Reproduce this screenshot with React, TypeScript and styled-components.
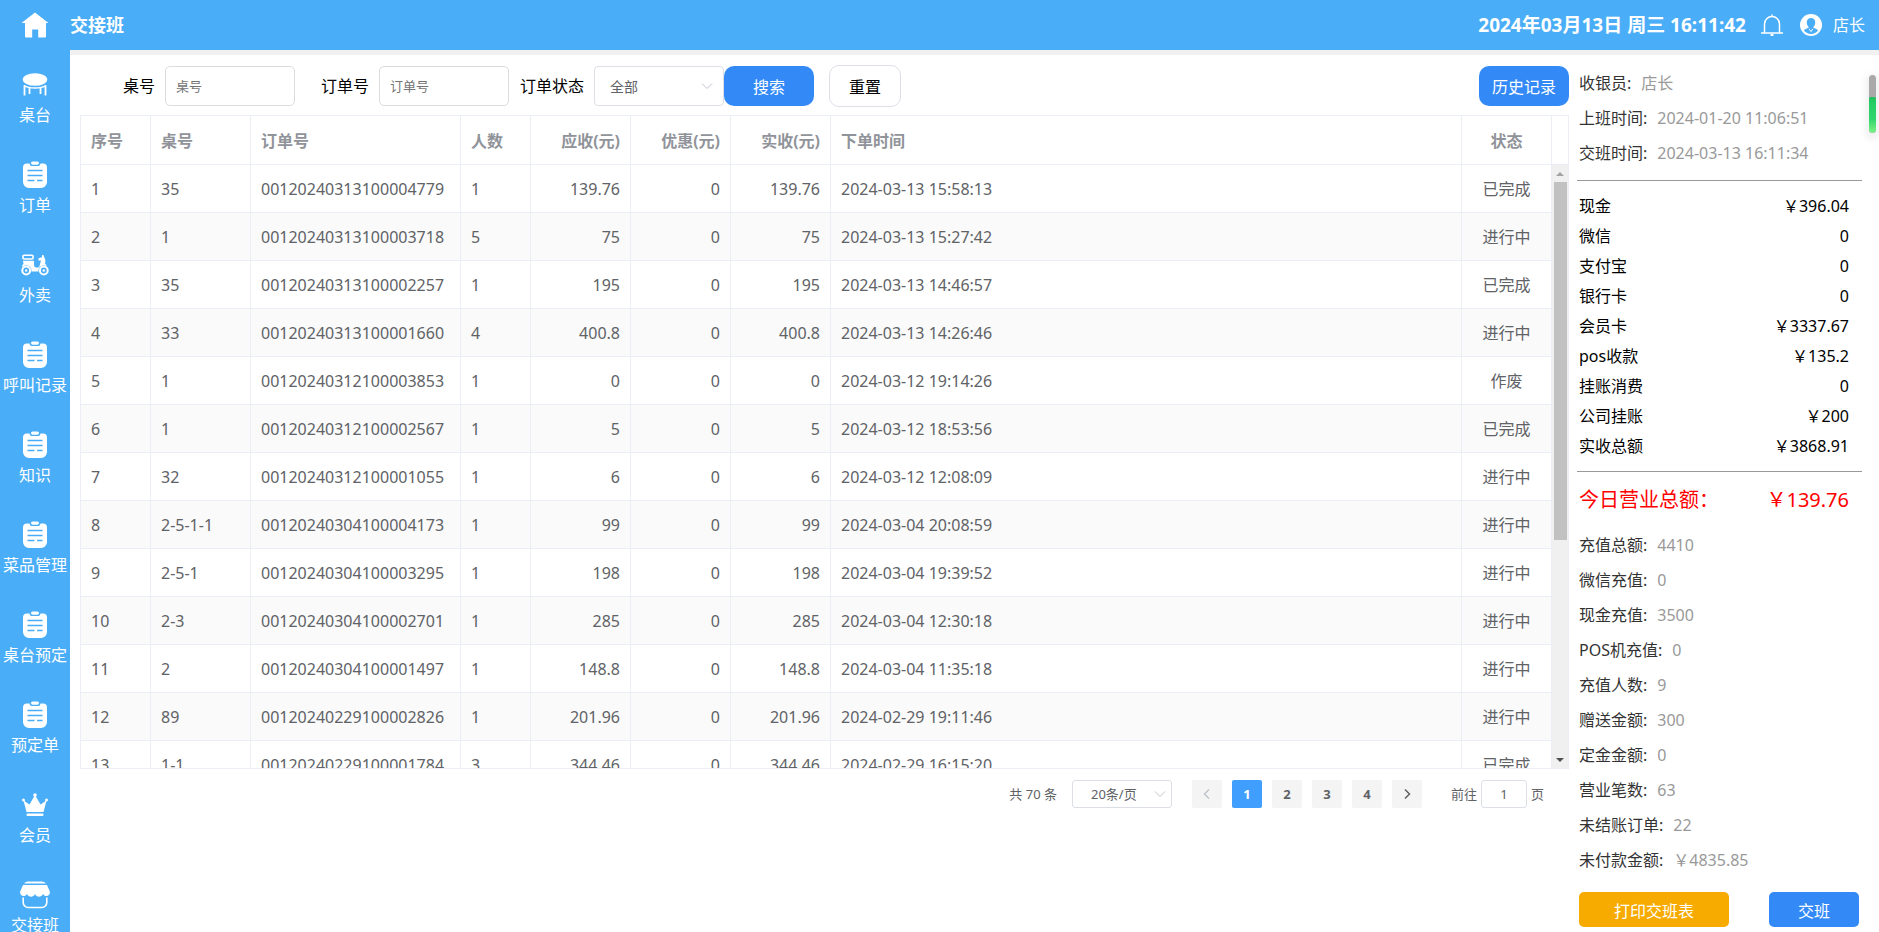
import React from 'react';
import styled, { createGlobalStyle, css } from 'styled-components';

const GlobalStyle = createGlobalStyle`
  * { box-sizing: border-box; }
  body {
    margin: 0;
    overflow: hidden;
    font-family: "Noto Sans", "Noto Sans CJK SC", sans-serif;
    font-size: 16px;
    line-height: 24px;
    color: #000;
    background: #fff;
  }
  button, input, select { font-family: inherit; }
`;

const Page = styled.div`
  display: flex;
  flex-direction: column;
  height: 100vh;
`;

const Header = styled.header`
  display: flex;
  align-items: center;
  flex: none;
  height: 50px;
  padding-right: 14px;
  background: #4aadf7;
  color: #fff;
`;

const HomeLink = styled.a`
  display: flex;
  justify-content: center;
  width: 70px;
`;

const Title = styled.h1`
  flex: 1;
  margin: 0;
  font-size: 18px;
  font-weight: 700;
`;

const Clock = styled.time`
  font-size: 19px;
  font-weight: 700;
  margin-right: 14px;
`;

const BellButton = styled.button`
  display: flex;
  padding: 0;
  border: 0;
  background: none;
  color: inherit;
  margin-right: 16px;
`;

const User = styled.div`
  display: flex;
  align-items: center;
  gap: 11px;
`;

const Shell = styled.div`
  display: flex;
  flex: 1;
  min-height: 0;
`;

const Sidebar = styled.nav`
  flex: none;
  width: 70px;
  overflow: hidden;
  background: #4aadf7;
`;

const NavItem = styled.a`
  display: flex;
  flex-direction: column;
  align-items: center;
  gap: 3px;
  height: 90px;
  padding-top: 20px;
  color: #fff;
  text-decoration: none;
  white-space: nowrap;
`;

const Main = styled.main`
  position: relative;
  display: flex;
  flex: 1;
  min-width: 0;
  border-top: 5px solid #f1f1f1;
`;

const Orders = styled.section`
  flex: 1;
  min-width: 0;
  padding: 10px 0 0 10px;
`;

const Filters = styled.form`
  display: flex;
  align-items: center;
  height: 42px;
  margin-bottom: 8px;
  padding-left: 43px;
`;

const Field = styled.label<{ $gap?: number }>`
  display: flex;
  align-items: center;
  gap: 10px;
  margin-right: ${(p) => p.$gap ?? 0}px;
  white-space: nowrap;
`;

const TextInput = styled.input`
  width: 130px;
  height: 40px;
  padding: 0 10px;
  border: 1px solid #dcdcdc;
  border-radius: 5px;
  font-size: 13px;
  &::placeholder { color: #757575; }
`;

const SelectBox = styled.span<{ $small?: boolean }>`
  display: grid;
  align-items: center;
  width: ${(p) => (p.$small ? 100 : 130)}px;
  > * { grid-area: 1 / 1; }
  > svg {
    justify-self: end;
    margin-right: ${(p) => (p.$small ? 6 : 11)}px;
    pointer-events: none;
  }
`;

const Select = styled.select<{ $small?: boolean }>`
  appearance: none;
  width: 100%;
  height: ${(p) => (p.$small ? 28 : 40)}px;
  padding: ${(p) => (p.$small ? '0 18px' : '0 15px')};
  border: 1px solid #dcdfe6;
  border-radius: ${(p) => (p.$small ? 3 : 4)}px;
  background: #fff;
  color: #606266;
  font-size: ${(p) => (p.$small ? 13 : 14)}px;
`;

const Button = styled.button<{ $color?: string; $width: number; $height: number; $radius: number }>`
  width: ${(p) => p.$width}px;
  height: ${(p) => p.$height}px;
  padding: 0;
  border: ${(p) => (p.$color ? '0' : '1px solid #dcdfe6')};
  border-radius: ${(p) => p.$radius}px;
  background: ${(p) => p.$color ?? '#fff'};
  color: ${(p) => (p.$color ? '#fff' : '#000')};
  font-size: 16px;
  white-space: nowrap;
`;

const ResetSlot = styled.div`
  flex: 1;
  margin-left: 15px;
`;

const TableFrame = styled.div`
  display: flex;
  height: calc(100vh - 278px);
  border: 1px solid #ebeef5;
`;

const TableScroll = styled.div`
  flex: 1;
  min-width: 0;
  overflow: hidden;
`;

const Table = styled.table`
  width: 100%;
  table-layout: fixed;
  border-collapse: separate;
  border-spacing: 0;
  color: #606266;
`;

const cell = css<{ $align?: string }>`
  padding: 0 10px;
  border-right: 1px solid #ebeef5;
  border-bottom: 1px solid #ebeef5;
  text-align: ${(p) => p.$align ?? 'left'};
  white-space: nowrap;
`;

const HeadCell = styled.th<{ $align?: string; $width?: number }>`
  ${cell}
  position: sticky;
  top: 0;
  width: ${(p) => (p.$width ? `${p.$width}px` : 'auto')};
  height: 49px;
  padding-top: 2px;
  background: #fff;
  color: #909399;
  font-weight: 700;
`;

const BodyRow = styled.tr`
  height: 48px;
  &:nth-child(even) { background: #fafafa; }
`;

const Cell = styled.td<{ $align?: string }>`
  ${cell}
`;

const Rail = styled.div`
  display: flex;
  flex-direction: column;
  flex: none;
  width: 16px;
`;

const RailHead = styled.div`
  height: 49px;
  border-bottom: 1px solid #ebeef5;
`;

const RailTrack = styled.div`
  display: flex;
  flex: 1;
  flex-direction: column;
  align-items: center;
  background: #f0f0f0;
`;

const RailArrow = styled.span<{ $down?: boolean }>`
  display: flex;
  align-items: center;
  justify-content: center;
  height: 17px;
  color: ${(p) => (p.$down ? '#505050' : '#a3a3a3')};
`;

const RailBody = styled.div`
  flex: 1;
  width: 13px;
`;

const RailThumb = styled.div`
  height: 63%;
  background: #c1c1c1;
`;

const Pagination = styled.nav`
  display: flex;
  align-items: center;
  justify-content: flex-end;
  height: 28px;
  margin-top: 11px;
  padding-right: 25px;
  font-size: 13px;
  color: #606266;
`;

const Pages = styled.div`
  display: flex;
  gap: 10px;
  margin: 0 29px 0 20px;
`;

const PageButton = styled.button<{ $active?: boolean }>`
  display: flex;
  align-items: center;
  justify-content: center;
  width: 30px;
  height: 28px;
  padding: 0;
  border: 0;
  border-radius: 2px;
  background: ${(p) => (p.$active ? '#409eff' : '#f4f4f5')};
  color: ${(p) => (p.$active ? '#fff' : '#606266')};
  font-size: 13px;
  font-weight: 700;
  &:disabled { color: #c0c4cc; }
`;

const Total = styled.span`
  margin-right: 15px;
`;

const Jump = styled.label`
  display: flex;
  align-items: center;
  gap: 4px;
`;

const JumpInput = styled.input`
  width: 46px;
  height: 28px;
  padding: 0;
  border: 1px solid #dcdfe6;
  border-radius: 3px;
  color: #606266;
  font-size: 13px;
  text-align: center;
`;

const Summary = styled.aside`
  flex: none;
  width: 310px;
  padding: 10px 17px 0 8px;
`;

const Facts = styled.dl`
  margin: 0;
  padding: 0 2px;
`;

const Fact = styled.div`
  display: flex;
  align-items: center;
  gap: 10px;
  height: 35px;
`;

const FactName = styled.dt`
  color: #333;
`;

const FactValue = styled.dd`
  margin: 0;
  color: #999;
`;

const Amounts = styled.dl`
  margin: 10px 0 0;
  padding: 10px 13px 10px 2px;
  border: solid #999;
  border-width: 1px 0;
`;

const Amount = styled.div`
  display: flex;
  align-items: center;
  justify-content: space-between;
  height: 30px;
  dd { margin: 0; }
`;

const DayTotal = styled.p`
  display: flex;
  align-items: center;
  justify-content: space-between;
  height: 55px;
  margin: 0;
  padding: 0 13px 0 2px;
  color: #f00;
  font-size: 20px;
`;

const Actions = styled.div`
  display: flex;
  justify-content: space-between;
  padding: 15px 3px 0 2px;
`;

const Meter = styled.div`
  position: absolute;
  top: 20px;
  right: 3px;
  width: 7px;
  height: 58px;
  overflow: hidden;
  border-radius: 4px;
  background: #a9a9a9;
  box-shadow: 0 3px 6px 4px rgba(0, 0, 0, 0.06);
`;

const MeterFill = styled.div`
  height: 36px;
  margin-top: 22px;
  border-radius: 2px 2px 4px 4px;
  background: linear-gradient(#1fbf5c, #26cf67 20%, #2fd56c 60%, #7df288);
`;

const HomeIcon = () => (
  <svg width="28" height="28" viewBox="0 0 28 28" fill="#fff">
    <path d="M14 1.500 27.500 12H25V25.500a1 1 0 0 1-1 1H17.200V18.500h-6V26.500H5a1 1 0 0 1-1-1V12H.5Z" />
  </svg>
);

const TableIcon = () => (
  <svg width="30" height="30" viewBox="0 0 30 30" fill="none" stroke="#fff">
    <ellipse cx="15" cy="9.500" rx="12.200" ry="6.300" fill="#fff" stroke="none" />
    <path d="M4.500 15.500v10M9.500 18v6M20.500 18v6M25.500 15.500v10" strokeWidth="1.800" />
    <path d="M4 15.500c5 3.400 17 3.400 22 0" strokeWidth="1.500" />
  </svg>
);

const OrderIcon = () => (
  <svg width="30" height="30" viewBox="0 0 30 30">
    <path d="M7 3.500h2.500c.5 2 1.200 2.500 2.400 2.500h6.200c1.200 0 1.900-.5 2.400-2.500H23a4 4 0 0 1 4 4v14.500a6 6 0 0 1-6 6H9a6 6 0 0 1-6-6V7.500a4 4 0 0 1 4-4Z" fill="#fff" />
    <rect x="11" y="1.500" width="8" height="3.200" rx="1.600" fill="#fff" />
    <path d="M7.500 10.500h15M7.500 15.500h15M7.500 20.500h7M17 20.500h5.500" stroke="#4aadf7" strokeWidth="1.300" />
  </svg>
);

const ScooterIcon = () => (
  <svg width="30" height="30" viewBox="0 0 30 30" fill="none" stroke="#fff">
    <rect x="3" y="5.200" width="10" height="3.800" rx="1" strokeWidth="1.600" />
    <path d="M3 10.800h11v4.200c0 1.600 1 2.500 2.300 2.500h1.200c1 0 1.700-.6 2-1.600l1.500-5.400h-2.500V8.300l3.500-1V5h1.400l2 5-.3 3.700 1.800 1.800c-3.500.5-5.500 2.500-5.900 6H9.500c-.3-3-2.500-5-7.500-4.300 0-1.800.7-2.800 1.500-3.200Z" fill="#fff" stroke="none" />
    <circle cx="6.200" cy="20.500" r="5.300" fill="#4aadf7" stroke="none" />
    <circle cx="23.800" cy="20.500" r="5.300" fill="#4aadf7" stroke="none" />
    <circle cx="6.200" cy="20.500" r="3.900" strokeWidth="2" />
    <circle cx="23.800" cy="20.500" r="3.900" strokeWidth="2" />
    <circle cx="6.200" cy="20.500" r="1.200" fill="#fff" stroke="none" />
    <circle cx="23.800" cy="20.500" r="1.200" fill="#fff" stroke="none" />
  </svg>
);

const CrownIcon = () => (
  <svg width="30" height="30" viewBox="0 0 30 30" fill="#fff">
    <path d="m3.500 10.500 6 4L15 5l5.500 9.500 6-4L23.500 22h-17Z" />
    <circle cx="15" cy="5" r="1.800" />
    <circle cx="3.500" cy="10" r="1.500" />
    <circle cx="26.500" cy="10" r="1.500" />
    <rect x="6.500" y="23.500" width="17" height="2.500" rx="1" />
  </svg>
);

const ShopIcon = () => (
  <svg width="30" height="30" viewBox="0 0 30 30" fill="none" stroke="#fff">
    <path d="M8 1.500h14a6 6 0 0 1 4 2H4a6 6 0 0 1 4-2ZM3 5h24l3 7c0 5-5.500 5-7 2-1.500 3.500-6.500 3.500-8 0-1.500 3.500-6.500 3.500-8 0-1.500 3-7 3-7-2Z" fill="#fff" stroke="none" />
    <path d="M3.200 17.500v5a5 5 0 0 0 5 5h13.600a5 5 0 0 0 5-5v-5" strokeWidth="1.600" />
  </svg>
);

const BellIcon = () => (
  <svg width="24" height="24" viewBox="0 0 24 24" fill="none" stroke="#fff" strokeWidth="1.500">
    <path d="M4.500 20V11a7.500 7.500 0 0 1 15 0v9M1 20h22M12 3.500V1.500" />
    <path d="M10.500 22h3" strokeWidth="2" />
  </svg>
);

const UserIcon = () => (
  <svg width="22" height="22" viewBox="0 0 22 22">
    <circle cx="11" cy="11" r="11" fill="#fff" />
    <path d="M11 4a4.200 4.200 0 0 1 4.200 4.500c0 2-.8 3.700-2 4.600.2 1.300 3.800 1.600 4.800 3.400A8.800 8.800 0 0 1 4 16.500c1-1.800 4.600-2.100 4.800-3.400-1.200-.9-2-2.600-2-4.600A4.200 4.200 0 0 1 11 4Z" fill="#4aadf7" />
    <path d="m9 14.800 2 2.700 2-2.700" fill="none" stroke="#fff" strokeWidth="1" />
  </svg>
);

const Chevron = ({ dir = 'down', color = '#c0c4cc', width = 1 }: { dir?: 'down' | 'left' | 'right'; color?: string; width?: number }) => {
  const d = { down: 'M1 3.500 6 8.500 11 3.500', left: 'M8 1.500 3.500 6 8 10.500', right: 'M4 1.500 8.500 6 4 10.500' }[dir];
  return (
    <svg width="12" height="12" viewBox="0 0 12 12" fill="none" stroke={color} strokeWidth={width}>
      <path d={d} />
    </svg>
  );
};

const navItems = [
  { label: '桌台', Icon: TableIcon },
  { label: '订单', Icon: OrderIcon },
  { label: '外卖', Icon: ScooterIcon },
  { label: '呼叫记录', Icon: OrderIcon },
  { label: '知识', Icon: OrderIcon },
  { label: '菜品管理', Icon: OrderIcon },
  { label: '桌台预定', Icon: OrderIcon },
  { label: '预定单', Icon: OrderIcon },
  { label: '会员', Icon: CrownIcon },
  { label: '交接班', Icon: ShopIcon },
];

const columns: { title: string; width?: number; align?: string }[] = [
  { title: '序号', width: 70 },
  { title: '桌号', width: 100 },
  { title: '订单号', width: 210 },
  { title: '人数', width: 70 },
  { title: '应收(元)', width: 100, align: 'right' },
  { title: '优惠(元)', width: 100, align: 'right' },
  { title: '实收(元)', width: 100, align: 'right' },
  { title: '下单时间' },
  { title: '状态', width: 90, align: 'center' },
];

const orders = [
  ['1', '35', '00120240313100004779', '1', '139.76', '0', '139.76', '2024-03-13 15:58:13', '已完成'],
  ['2', '1', '00120240313100003718', '5', '75', '0', '75', '2024-03-13 15:27:42', '进行中'],
  ['3', '35', '00120240313100002257', '1', '195', '0', '195', '2024-03-13 14:46:57', '已完成'],
  ['4', '33', '00120240313100001660', '4', '400.8', '0', '400.8', '2024-03-13 14:26:46', '进行中'],
  ['5', '1', '00120240312100003853', '1', '0', '0', '0', '2024-03-12 19:14:26', '作废'],
  ['6', '1', '00120240312100002567', '1', '5', '0', '5', '2024-03-12 18:53:56', '已完成'],
  ['7', '32', '00120240312100001055', '1', '6', '0', '6', '2024-03-12 12:08:09', '进行中'],
  ['8', '2-5-1-1', '00120240304100004173', '1', '99', '0', '99', '2024-03-04 20:08:59', '进行中'],
  ['9', '2-5-1', '00120240304100003295', '1', '198', '0', '198', '2024-03-04 19:39:52', '进行中'],
  ['10', '2-3', '00120240304100002701', '1', '285', '0', '285', '2024-03-04 12:30:18', '进行中'],
  ['11', '2', '00120240304100001497', '1', '148.8', '0', '148.8', '2024-03-04 11:35:18', '进行中'],
  ['12', '89', '00120240229100002826', '1', '201.96', '0', '201.96', '2024-02-29 19:11:46', '进行中'],
  ['13', '1-1', '00120240229100001784', '3', '344.46', '0', '344.46', '2024-02-29 16:15:20', '已完成'],
];

const shift = [
  ['收银员', '店长'],
  ['上班时间', '2024-01-20 11:06:51'],
  ['交班时间', '2024-03-13 16:11:34'],
];

const payments = [
  ['现金', '￥396.04'],
  ['微信', '0'],
  ['支付宝', '0'],
  ['银行卡', '0'],
  ['会员卡', '￥3337.67'],
  ['pos收款', '￥135.2'],
  ['挂账消费', '0'],
  ['公司挂账', '￥200'],
  ['实收总额', '￥3868.91'],
];

const totals = [
  ['充值总额', '4410'],
  ['微信充值', '0'],
  ['现金充值', '3500'],
  ['POS机充值', '0'],
  ['充值人数', '9'],
  ['赠送金额', '300'],
  ['定金金额', '0'],
  ['营业笔数', '63'],
  ['未结账订单', '22'],
  ['未付款金额', '￥4835.85'],
];

const FactList = ({ items }: { items: string[][] }) => (
  <Facts>
    {items.map(([name, value]) => (
      <Fact key={name}>
        <FactName>{name}:</FactName>
        <FactValue>{value}</FactValue>
      </Fact>
    ))}
  </Facts>
);

export default function App() {
  return (
    <Page>
      <GlobalStyle />
      <Header>
        <HomeLink href="#home" aria-label="首页"><HomeIcon /></HomeLink>
        <Title>交接班</Title>
        <Clock dateTime="2024-03-13T16:11:42">2024年03月13日 周三 16:11:42</Clock>
        <BellButton type="button" aria-label="通知"><BellIcon /></BellButton>
        <User><UserIcon />店长</User>
      </Header>
      <Shell>
        <Sidebar>
          {navItems.map(({ label, Icon }) => (
            <NavItem key={label} href={`#${label}`}><Icon />{label}</NavItem>
          ))}
        </Sidebar>
        <Main>
          <Orders>
            <Filters onSubmit={(e) => e.preventDefault()}>
              <Field $gap={26}>桌号<TextInput placeholder="桌号" /></Field>
              <Field $gap={11}>订单号<TextInput placeholder="订单号" /></Field>
              <Field>
                订单状态
                <SelectBox>
                  <Select defaultValue="all">
                    <option value="all">全部</option>
                    <option value="done">已完成</option>
                    <option value="open">进行中</option>
                    <option value="void">作废</option>
                  </Select>
                  <Chevron />
                </SelectBox>
              </Field>
              <Button type="submit" $color="#338af7" $width={90} $height={40} $radius={10}>搜索</Button>
              <ResetSlot>
                <Button type="reset" $width={72} $height={42} $radius={10}>重置</Button>
              </ResetSlot>
              <Button type="button" $color="#338af7" $width={90} $height={40} $radius={10}>历史记录</Button>
            </Filters>
            <TableFrame>
              <TableScroll>
                <Table>
                  <thead>
                    <tr>
                      {columns.map((c) => (
                        <HeadCell key={c.title} $width={c.width} $align={c.align}>{c.title}</HeadCell>
                      ))}
                    </tr>
                  </thead>
                  <tbody>
                    {orders.map((row) => (
                      <BodyRow key={row[0]}>
                        {row.map((value, i) => (
                          <Cell key={columns[i].title} $align={columns[i].align}>{value}</Cell>
                        ))}
                      </BodyRow>
                    ))}
                  </tbody>
                </Table>
              </TableScroll>
              <Rail>
                <RailHead />
                <RailTrack>
                  <RailArrow>
                    <svg width="8" height="4" viewBox="0 0 8 4" fill="currentColor"><path d="M4 0l4 4H0Z" /></svg>
                  </RailArrow>
                  <RailBody><RailThumb /></RailBody>
                  <RailArrow $down>
                    <svg width="8" height="4" viewBox="0 0 8 4" fill="currentColor"><path d="M4 4 0 0h8Z" /></svg>
                  </RailArrow>
                </RailTrack>
              </Rail>
            </TableFrame>
            <Pagination aria-label="分页">
              <Total>共 70 条</Total>
              <SelectBox $small>
                <Select $small defaultValue="20" aria-label="每页条数">
                  <option value="20">20条/页</option>
                  <option value="50">50条/页</option>
                </Select>
                <Chevron />
              </SelectBox>
              <Pages>
                <PageButton type="button" disabled aria-label="上一页"><Chevron dir="left" width={1.5} /></PageButton>
                {[1, 2, 3, 4].map((n) => (
                  <PageButton key={n} type="button" $active={n === 1}>{n}</PageButton>
                ))}
                <PageButton type="button" aria-label="下一页"><Chevron dir="right" color="#606266" width={1.5} /></PageButton>
              </Pages>
              <Jump>前往<JumpInput defaultValue="1" />页</Jump>
            </Pagination>
          </Orders>
          <Summary>
            <FactList items={shift} />
            <Amounts>
              {payments.map(([name, value]) => (
                <Amount key={name}><dt>{name}</dt><dd>{value}</dd></Amount>
              ))}
            </Amounts>
            <DayTotal><span>今日营业总额：</span><span>￥139.76</span></DayTotal>
            <FactList items={totals} />
            <Actions>
              <Button type="button" $color="#f7ab00" $width={150} $height={35} $radius={5}>打印交班表</Button>
              <Button type="button" $color="#338af7" $width={90} $height={35} $radius={5}>交班</Button>
            </Actions>
          </Summary>
          <Meter><MeterFill /></Meter>
        </Main>
      </Shell>
    </Page>
  );
}
